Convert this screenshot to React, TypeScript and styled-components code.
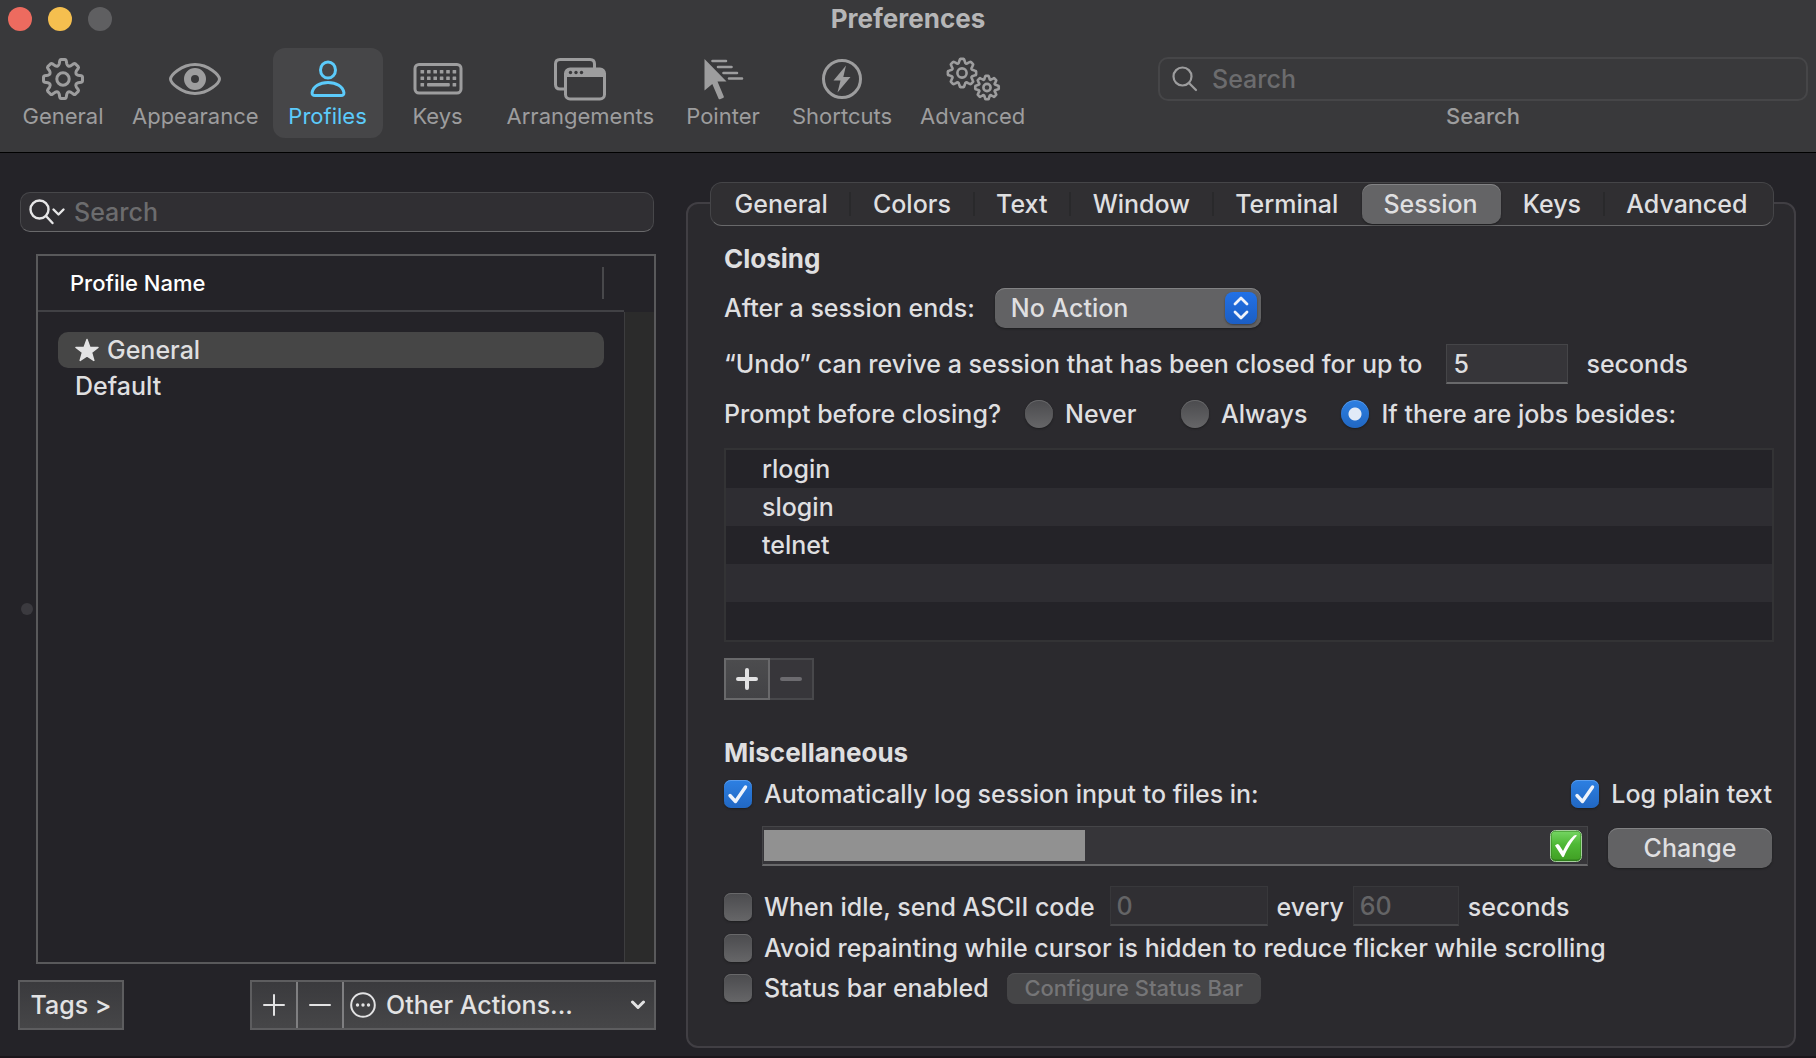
import React, { useState } from "react";
import styled, { createGlobalStyle, css } from "styled-components";

const GlobalStyle = createGlobalStyle`
  *, *::before, *::after { box-sizing: border-box; }
  body {
    margin: 0;
    background: #242328;
    color: #dfdfe0;
    font-family: Inter, "Noto Sans", sans-serif;
    font-size: 25px;
    line-height: 32px;
    font-weight: 450;
    font-optical-sizing: none;
  }
  button, input, select { font: inherit; color: inherit; margin: 0; }
  svg { display: block; flex: none; }
`;

/* ---------- window frame ---------- */

const Window = styled.div`
  display: flex;
  flex-direction: column;
  min-height: 100vh;
  border-bottom: 2px solid #1b161b;
`;

const Header = styled.header`
  background: #39393b;
  border-bottom: 1px solid #000;
`;

const TitleBar = styled.div`
  display: grid;
  grid-template-columns: 1fr auto 1fr;
  align-items: center;
  height: 38px;
  padding: 0 8px;
`;

const Lights = styled.div`
  display: flex;
  gap: 16px;
`;

const Light = styled.button<{ $color: string }>`
  width: 24px;
  height: 24px;
  padding: 0;
  border: 0;
  border-radius: 50%;
  background: ${(p) => p.$color};
`;

const Title = styled.h1`
  margin: 0;
  font-size: 26px;
  line-height: 32px;
  font-weight: 700;
  color: #b6b6b7;
`;

const Toolbar = styled.nav`
  display: flex;
  padding: 10px 8px 14px;
`;

const ToolItem = styled.button<{ $active?: boolean }>`
  display: flex;
  flex-direction: column;
  align-items: center;
  min-width: 110px;
  height: 90px;
  padding: 9px 14px 0;
  border: 0;
  border-radius: 12px;
  background: ${(p) => (p.$active ? "#464648" : "transparent")};
  color: ${(p) => (p.$active ? "#5ccbfb" : "#9d9d9e")};
  font-size: 22px;
  line-height: 30px;
  font-weight: 400;
`;

const ToolSearch = styled.div`
  display: flex;
  flex-direction: column;
  flex: 0 1 650px;
  margin-left: auto;
  padding-top: 9px;
  text-align: center;
  font-size: 22px;
  line-height: 30px;
  color: #9d9d9e;
`;

const ToolSearchField = styled.div`
  display: flex;
  align-items: center;
  gap: 14px;
  height: 44px;
  padding: 0 12px;
  border: 2px solid #464648;
  border-radius: 10px;
`;

const BareInput = styled.input`
  flex: 1;
  min-width: 0;
  padding: 0;
  border: 0;
  outline: 0;
  background: transparent;
  font-size: 25px;
  &::placeholder { color: #6c6c6e; opacity: 1; }
`;

const Body = styled.div`
  display: flex;
  flex: 1;
`;

/* ---------- profile list ---------- */

const Sidebar = styled.aside`
  display: flex;
  flex-direction: column;
  flex: 0 0 656px;
  padding: 39px 0 26px;
`;

const ProfileSearch = styled.div`
  display: flex;
  align-items: center;
  gap: 8px;
  height: 40px;
  margin: 0 2px 22px 20px;
  padding: 0 8px;
  border: 1px solid #47474a;
  border-bottom-color: #69696b;
  border-radius: 10px;
  background: #302f33;
`;

const ListArea = styled.div`
  display: flex;
  flex: 1;
`;

const SplitHandle = styled.div`
  display: flex;
  align-items: center;
  justify-content: flex-end;
  width: 36px;
  padding-right: 3px;
  &::after {
    content: "";
    width: 12px;
    height: 12px;
    border-radius: 50%;
    background: #3b3a3f;
  }
`;

const ListFrame = styled.div`
  display: flex;
  flex: 1;
  border: 2px solid #59595b;
`;

const ProfileTable = styled.table`
  display: block;
  flex: 1;
`;

const TableHead = styled.thead`
  display: block;
  border-bottom: 2px solid #414145;
`;

const HeadRow = styled.tr`
  display: flex;
  align-items: center;
  height: 54px;
  padding-right: 20px;
`;

const HeadCell = styled.th`
  flex: 1;
  padding: 0 0 0 32px;
  border-right: 2px solid #48484b;
  text-align: left;
  font-size: 22px;
  line-height: 32px;
  font-weight: 500;
  color: #fff;
`;

const TableBody = styled.tbody`
  display: block;
  padding: 20px;
`;

const ProfileRow = styled.tr<{ $selected?: boolean }>`
  display: flex;
  border-radius: 10px;
  background: ${(p) => (p.$selected ? "#464646" : "transparent")};
`;

const ProfileCell = styled.td`
  display: flex;
  align-items: center;
  gap: 8px;
  height: 36px;
  padding: 0 17px;
`;

const ScrollGutter = styled.div`
  width: 30px;
  margin-top: 56px;
  border-left: 1px solid #3d3d3f;
  background: #2b2b2b;
`;

const SidebarFooter = styled.div`
  display: flex;
  justify-content: space-between;
  margin: 16px 0 0 18px;
`;

const squareButton = css`
  height: 50px;
  border: 2px solid #5d5d5f;
  border-radius: 0;
  background: linear-gradient(#3a3a3d, #464648);
  color: #e2e2e3;
`;

const TagsButton = styled.button`
  ${squareButton}
  width: 106px;
  padding: 0;
`;

const ActionBar = styled.div`
  ${squareButton}
  display: flex;
  width: 406px;
`;

const ActionButton = styled.button`
  display: flex;
  align-items: center;
  justify-content: center;
  width: 46px;
  padding: 0;
  border: 0;
  border-right: 2px solid #7f7f81;
  background: transparent;
`;

const ActionMenu = styled.div`
  display: flex;
  align-items: center;
  flex: 1;
  gap: 10px;
  padding: 0 8px 0 6px;
`;

const BareSelect = styled.select`
  flex: 1;
  min-width: 0;
  height: 36px;
  padding: 0;
  border: 0;
  outline: 0;
  appearance: none;
  background: transparent;
`;

/* ---------- settings ---------- */

const Main = styled.main`
  display: flex;
  flex-direction: column;
  flex: 1;
  min-width: 0;
  padding: 29px 20px 8px 30px;
`;

const Tabs = styled.div`
  z-index: 1;
  display: flex;
  height: 44px;
  margin: 0 22px 0 24px;
  padding: 1px 2px;
  border: 1px solid #454548;
  border-bottom-color: #69696b;
  border-radius: 12px;
  background: #302f32;
`;

const Tab = styled.button<{ $active: boolean; $divider: boolean }>`
  display: flex;
  flex: 1 1 auto;
  align-items: center;
  padding: 0;
  border: 0;
  border-radius: 10px;
  background: transparent;
  white-space: nowrap;
  &::after {
    content: "";
    width: 2px;
    height: 24px;
    background: ${(p) => (p.$divider ? "#29292b" : "transparent")};
  }
  ${(p) =>
    p.$active &&
    css`
      background: #646466;
      box-shadow: inset 0 1px #828284, 0 1px 2px #1d1d1f;
    `}
`;

const TabText = styled.span`
  flex: 1;
  text-align: center;
`;

const Panel = styled.section`
  flex: 1;
  margin-top: -24px;
  padding: 35px 20px 35px 36px;
  border: 2px solid #413f44;
  border-radius: 12px;
  background: #2b2a2e;
`;

const Heading = styled.h2<{ $spaced?: boolean }>`
  margin: ${(p) => (p.$spaced ? "33px 0 1px" : "0 0 9px")};
  font-size: 26px;
  line-height: 40px;
  font-weight: 700;
`;

const Row = styled.div<{ $after?: number }>`
  display: flex;
  align-items: center;
  height: 40px;
  margin-bottom: ${(p) => p.$after ?? 0}px;
  white-space: nowrap;
`;

const PopUp = styled.div`
  display: flex;
  align-items: center;
  width: 266px;
  height: 40px;
  margin-left: 20px;
  padding: 0 4px 0 16px;
  border-radius: 10px;
  background: #626264;
  box-shadow: inset 0 1px #828284, 0 1px 2px #1d1d1f;
`;

const Stepper = styled.span`
  display: grid;
  place-items: center;
  width: 32px;
  height: 32px;
  border-radius: 8px;
  background: linear-gradient(#2271e6, #1b5ec4);
  box-shadow: 0 1px 2px #3c3c3e;
  pointer-events: none;
`;

const field = css`
  height: 40px;
  border: 1px solid #454548;
  border-bottom: 2px solid #69696b;
  border-radius: 0;
  background: #363539;
`;

const NumberField = styled.input<{ $width: number }>`
  ${field}
  width: ${(p) => p.$width}px;
  padding: 0 6px;
  outline: 0;
  &:disabled {
    border-color: #38383b;
    border-bottom-color: #464649;
    background: #302f33;
    color: #646466;
  }
`;

const Choice = styled.label`
  display: flex;
  align-items: center;
  gap: 12px;
`;

const UndoLabel = styled.label`
  display: flex;
  align-items: center;
  gap: 24px;
  margin-right: 18px;
`;

const Choices = styled.div`
  display: flex;
  gap: 34px;
  margin-left: 24px;
  & > label { min-width: 122px; }
`;

const toggle = css`
  appearance: none;
  flex: none;
  width: 28px;
  height: 28px;
  background: linear-gradient(#4b4b4e, #666668);
  box-shadow: inset 0 1px #68686a, 0 1px 2px #1d1d1f;
`;

const Radio = styled.input`
  ${toggle}
  border-radius: 50%;
  &:checked {
    background: radial-gradient(circle, #e1eaf7 6px, transparent 7px), linear-gradient(#2d80e3, #2167c2);
    box-shadow: inset 0 1px #5a9cec, 0 1px 2px #1d1d1f;
  }
`;

const CheckStack = styled.span`
  display: grid;
  flex: none;
  & > * { grid-area: 1 / 1; place-self: center; }
  & > svg { pointer-events: none; visibility: hidden; }
  & > input:checked + svg { visibility: visible; }
`;

const CheckInput = styled.input`
  ${toggle}
  border-radius: 7px;
  &:checked {
    background: linear-gradient(#2d80e3, #2167c2);
    box-shadow: inset 0 1px #5a9cec, 0 1px 2px #1d1d1f;
  }
`;

const JobList = styled.ul`
  margin: 0 0 16px;
  padding: 0;
  border: 2px solid #333335;
  list-style: none;
`;

const Job = styled.li`
  height: 38px;
  padding: 0 36px;
  line-height: 38px;
  background: #242328;
  &:nth-child(even) { background: #2e2d32; }
`;

const AddRemove = styled.div`
  display: flex;
`;

const SmallSquare = styled.button`
  display: grid;
  place-items: center;
  width: 46px;
  height: 42px;
  padding: 0;
  border: 2px solid #69696b;
  background: linear-gradient(#4c4c4e, #434346);
  color: #e2e2e3;
  &:disabled {
    width: 44px;
    border-color: #48484b;
    border-left-width: 0;
    background: #37363a;
    color: #6c6b6f;
  }
`;

const PathRow = styled.div`
  display: flex;
  gap: 20px;
  height: 42px;
  margin: 12px 2px 18px 38px;
`;

const PathField = styled.div`
  ${field}
  display: flex;
  align-items: center;
  flex: 1;
  padding: 0 5px 0 1px;
`;

const Redaction = styled.span`
  width: 321px;
  height: 31px;
  background: #919191;
`;

const PushButton = styled.button`
  align-self: flex-end;
  width: 164px;
  height: 40px;
  padding: 0;
  border: 0;
  border-radius: 10px;
  background: #626264;
  box-shadow: inset 0 1px #828284, 0 1px 2px #1d1d1f;
`;

const SmallPushButton = styled.button`
  width: 254px;
  height: 31px;
  margin-left: 18px;
  padding: 0;
  border: 0;
  border-radius: 8px;
  background: #454547;
  box-shadow: inset 0 1px #505052;
  color: #757577;
  font-size: 22px;
  line-height: 30px;
`;

const Spread = styled(Row)`
  justify-content: space-between;
  padding-right: 2px;
`;

const IdleRow = styled(Row)`
  gap: 9px;
  height: 42px;
  & > input { align-self: flex-start; }
  & > label:first-child { padding-right: 6px; }
`;

/* ---------- icons ---------- */

function gearPath(cx: number, cy: number, outer: number, root: number) {
  const at = (deg: number, r: number) => {
    const a = (deg * Math.PI) / 180;
    return `${(cx + r * Math.sin(a)).toFixed(2)} ${(cy - r * Math.cos(a)).toFixed(2)}`;
  };
  let d = "";
  for (let i = 0; i < 8; i++) {
    const t = i * 45;
    d += `${i ? "L" : "M"}${at(t - 14, root + 1)}L${at(t - 10, outer - 1)}Q${at(t - 9, outer)} ${at(t - 6, outer)}`;
    d += `L${at(t + 6, outer)}Q${at(t + 9, outer)} ${at(t + 10, outer - 1)}L${at(t + 14, root + 1)}`;
    d += `Q${at(t + 22.5, root - 2)} ${at(t + 31, root + 1)}`;
  }
  return d + "Z";
}

const GearIcon = () => (
  <svg width="44" height="44" fill="none" stroke="currentColor" strokeWidth="3" strokeLinejoin="round">
    <path d={gearPath(22, 22, 19.6, 14.6)} />
    <circle cx="22" cy="22" r="6.2" />
  </svg>
);

const GearsIcon = () => (
  <svg width="56" height="44" fill="none" stroke="currentColor" strokeWidth="2.6" strokeLinejoin="round">
    <path d={gearPath(17, 16, 14.2, 10.8)} />
    <circle cx="17" cy="16" r="4.6" />
    <path d={gearPath(42, 30.5, 11.8, 8.8)} />
    <circle cx="42" cy="30.5" r="3.6" />
  </svg>
);

const EyeIcon = () => (
  <svg width="56" height="44" fill="none" stroke="currentColor" strokeWidth="3">
    <path d="M3.5 22C3.5 18.500 14 7.500 28 7.500S52.500 18.500 52.500 22 42 36.500 28 36.500 3.500 25.500 3.500 22Z" />
    <circle cx="28" cy="22" r="7.500" strokeWidth="7" />
  </svg>
);

const PersonIcon = () => (
  <svg width="44" height="44" fill="none" stroke="currentColor" strokeWidth="3">
    <ellipse cx="22" cy="13" rx="7.500" ry="8" />
    <path d="M9 38.500h26q3.200 0 2.900-3C36.800 29.500 30.500 25.500 22 25.500S7.200 29.500 6.100 35.500q-.3 3 2.900 3Z" />
  </svg>
);

const KeyboardIcon = () => (
  <svg width="52" height="44" fill="currentColor">
    <rect x="3" y="7.500" width="46" height="28.500" rx="4" fill="none" stroke="currentColor" strokeWidth="3" />
    {[13, 19.5].map((y) =>
      [8.5, 15, 21.4, 27.8, 34.2, 40.600].map((x) => <rect key={`${x}-${y}`} x={x} y={y} width="3.600" height="3.600" rx=".5" />)
    )}
    <rect x="8.500" y="26" width="3.600" height="3.600" rx=".5" />
    <rect x="15" y="26" width="22.800" height="3.600" rx="1" />
    <rect x="40.600" y="26" width="3.600" height="3.600" rx=".5" />
  </svg>
);

const WindowsIcon = () => (
  <svg width="56" height="44" fill="none" stroke="currentColor" strokeWidth="3">
    <path d="M12 32H8q-4.500 0-4.500-4.500V7q0-4.500 4.500-4.500h30q4.500 0 4.500 4.500v4" />
    <rect x="13.500" y="12" width="39" height="30" rx="4.500" />
    <path d="M13.500 20v-4q0-4 4-4h31q4 0 4 4v4Z" fill="currentColor" stroke="none" />
    <g fill="#39393b" stroke="none">
      <circle cx="18.500" cy="15.500" r="1.700" />
      <circle cx="24" cy="15.500" r="1.700" />
      <circle cx="29.500" cy="15.500" r="1.700" />
    </g>
  </svg>
);

const PointerIcon = () => (
  <svg width="42" height="44" fill="currentColor">
    <path d="M2.500 2 24.500 24.500H15.500L21.800 39.500q.3 1-.8 1.500l-3 1.200q-1 .3-1.500-.8L10.300 27 2.500 33.500Z" />
    <g stroke="currentColor" strokeWidth="2.600" strokeLinecap="round">
      <path d="M10.500 4H24M16 10H29.500M21.500 16H35M27 21.500H40" />
    </g>
  </svg>
);

const BoltIcon = () => (
  <svg width="44" height="44">
    <circle cx="22" cy="22" r="18.500" fill="none" stroke="currentColor" strokeWidth="3" />
    <path d="M26 8.500 13.500 23.500h7L17.500 35.500 30.500 20h-7.200Z" fill="currentColor" />
  </svg>
);

const SearchIcon = () => (
  <svg width="26" height="26" fill="none" stroke="currentColor" strokeWidth="2.200" strokeLinecap="round">
    <circle cx="10.500" cy="10.500" r="9" />
    <path d="m17 17 7 7" />
  </svg>
);

const SearchMenuIcon = () => (
  <svg width="37" height="26" fill="none" stroke="#e6e6e7" strokeWidth="2.400" strokeLinecap="round" strokeLinejoin="round">
    <circle cx="10.500" cy="10.500" r="9" />
    <path d="m17 17 6.500 7M24.500 10.500l5 5 5-5" />
  </svg>
);

const StarIcon = () => (
  <svg width="24" height="24" viewBox="0 0 24 24" fill="#e4e4e5" stroke="#e4e4e5" strokeWidth="1.500" strokeLinejoin="round">
    <path d="m12 1.500 2.800 7.700 8.200.3-6.500 5 2.300 7.900L12 17.800l-6.800 4.600 2.300-7.900-6.500-5 8.200-.3Z" />
  </svg>
);

const Sign = ({ plus, size, weight }: { plus?: boolean; size: number; weight: number }) => (
  <svg width="24" height="24" stroke="currentColor" strokeWidth={weight} strokeLinecap="round">
    <path d={`M${12 - size} 12H${12 + size}${plus ? `M12 ${12 - size}V${12 + size}` : ""}`} />
  </svg>
);

const EllipsisIcon = () => (
  <svg width="26" height="26" fill="#e2e2e3">
    <circle cx="13" cy="13" r="11.800" fill="none" stroke="#e2e2e3" strokeWidth="2" />
    <circle cx="7.500" cy="13" r="1.700" />
    <circle cx="13" cy="13" r="1.700" />
    <circle cx="18.500" cy="13" r="1.700" />
  </svg>
);

const ChevronIcon = () => (
  <svg width="16" height="10" fill="none" stroke="#e2e2e3" strokeWidth="3" strokeLinecap="round" strokeLinejoin="round">
    <path d="m2.500 2 5.500 5.500L13.500 2" />
  </svg>
);

const StepperIcon = () => (
  <svg width="20" height="24" fill="none" stroke="#f0f3fa" strokeWidth="2.800" strokeLinecap="round" strokeLinejoin="round">
    <path d="m4 8 6-6 6 6M4 16l6 6 6-6" />
  </svg>
);

const TickIcon = () => (
  <svg width="28" height="28" fill="none" stroke="#eef3fb" strokeWidth="3.400" strokeLinecap="round" strokeLinejoin="round">
    <path d="m6 15.500 5.500 6L21.500 7" />
  </svg>
);

const ValidIcon = () => (
  <svg width="32" height="32">
    <defs>
      <linearGradient id="valid" x1="0" y1="0" x2="0" y2="1">
        <stop offset="0" stopColor="#74d462" />
        <stop offset=".45" stopColor="#4fb936" />
        <stop offset="1" stopColor="#41a125" />
      </linearGradient>
    </defs>
    <rect x=".5" y=".5" width="31" height="31" rx="5" fill="#2f7f1c" stroke="#a5cf9c" />
    <rect x="1.500" y="1.500" width="29" height="28" rx="4" fill="url(#valid)" />
    <path d="M5 15.500q3-3 4.500 0l3.500 5.500C16 14.500 19.500 9.500 24 5.500q2-1 3 0C21 12.500 17.500 18.500 14 26.500q-1 1.500-2 0Z" fill="#fff" />
  </svg>
);

/* ---------- page ---------- */

const tools = [
  { name: "General", icon: <GearIcon /> },
  { name: "Appearance", icon: <EyeIcon /> },
  { name: "Profiles", icon: <PersonIcon /> },
  { name: "Keys", icon: <KeyboardIcon /> },
  { name: "Arrangements", icon: <WindowsIcon /> },
  { name: "Pointer", icon: <PointerIcon /> },
  { name: "Shortcuts", icon: <BoltIcon /> },
  { name: "Advanced", icon: <GearsIcon /> },
];

const tabs = ["General", "Colors", "Text", "Window", "Terminal", "Session", "Keys", "Advanced"];
const prompts = ["Never", "Always", "If there are jobs besides:"];
const jobs = ["rlogin", "slogin", "telnet", "", ""];

function CheckBox({ label, initial = false }: { label: string; initial?: boolean }) {
  return (
    <Choice>
      <CheckStack>
        <CheckInput type="checkbox" defaultChecked={initial} />
        <TickIcon />
      </CheckStack>
      {label}
    </Choice>
  );
}

export default function App() {
  const [tool, setTool] = useState("Profiles");
  const [tab, setTab] = useState("Session");
  const activeTab = tabs.indexOf(tab);

  return (
    <Window>
      <GlobalStyle />
      <Header>
        <TitleBar>
          <Lights>
            <Light $color="#ed6b5f" aria-label="Close" />
            <Light $color="#f5bf4f" aria-label="Minimize" />
            <Light $color="#5f5f61" aria-label="Zoom" />
          </Lights>
          <Title>Preferences</Title>
        </TitleBar>
        <Toolbar>
          {tools.map((t) => (
            <ToolItem key={t.name} $active={t.name === tool} onClick={() => setTool(t.name)}>
              {t.icon}
              {t.name}
            </ToolItem>
          ))}
          <ToolSearch>
            <ToolSearchField>
              <SearchIcon />
              <BareInput id="tool-search" type="text" placeholder="Search" />
            </ToolSearchField>
            <label htmlFor="tool-search">Search</label>
          </ToolSearch>
        </Toolbar>
      </Header>

      <Body>
        <Sidebar>
          <ProfileSearch>
            <SearchMenuIcon />
            <BareInput type="text" placeholder="Search" aria-label="Search profiles" />
          </ProfileSearch>
          <ListArea>
            <SplitHandle />
            <ListFrame>
              <ProfileTable>
                <TableHead>
                  <HeadRow>
                    <HeadCell>Profile Name</HeadCell>
                  </HeadRow>
                </TableHead>
                <TableBody>
                  <ProfileRow $selected>
                    <ProfileCell>
                      <StarIcon />
                      General
                    </ProfileCell>
                  </ProfileRow>
                  <ProfileRow>
                    <ProfileCell>Default</ProfileCell>
                  </ProfileRow>
                </TableBody>
              </ProfileTable>
              <ScrollGutter />
            </ListFrame>
          </ListArea>
          <SidebarFooter>
            <TagsButton>Tags &gt;</TagsButton>
            <ActionBar>
              <ActionButton aria-label="Add profile">
                <Sign plus size={10} weight={2} />
              </ActionButton>
              <ActionButton aria-label="Remove profile">
                <Sign size={10} weight={2} />
              </ActionButton>
              <ActionMenu>
                <EllipsisIcon />
                <BareSelect aria-label="Other actions">
                  <option>Other Actions...</option>
                </BareSelect>
                <ChevronIcon />
              </ActionMenu>
            </ActionBar>
          </SidebarFooter>
        </Sidebar>

        <Main>
          <Tabs role="tablist">
            {tabs.map((name, i) => (
              <Tab
                key={name}
                role="tab"
                aria-selected={name === tab}
                $active={name === tab}
                $divider={i !== activeTab && i !== activeTab - 1 && i !== tabs.length - 1}
                onClick={() => setTab(name)}
              >
                <TabText>{name}</TabText>
              </Tab>
            ))}
          </Tabs>
          <Panel>
            <Heading>Closing</Heading>
            <Row $after={16}>
              <label htmlFor="end-action">After a session ends:</label>
              <PopUp>
                <BareSelect id="end-action">
                  <option>No Action</option>
                </BareSelect>
                <Stepper>
                  <StepperIcon />
                </Stepper>
              </PopUp>
            </Row>
            <Row $after={10}>
              <UndoLabel>
                “Undo” can revive a session that has been closed for up to
                <NumberField $width={122} type="text" defaultValue="5" />
              </UndoLabel>
              seconds
            </Row>
            <Row $after={14} role="radiogroup" aria-label="Prompt before closing?">
              Prompt before closing?
              <Choices>
                {prompts.map((p, i) => (
                  <Choice key={p}>
                    <Radio type="radio" name="prompt" defaultChecked={i === 2} />
                    {p}
                  </Choice>
                ))}
              </Choices>
            </Row>
            <JobList>
              {jobs.map((job, i) => (
                <Job key={i}>{job}</Job>
              ))}
            </JobList>
            <AddRemove>
              <SmallSquare aria-label="Add job">
                <Sign plus size={9} weight={4} />
              </SmallSquare>
              <SmallSquare aria-label="Remove job" disabled>
                <Sign size={9} weight={4} />
              </SmallSquare>
            </AddRemove>

            <Heading $spaced>Miscellaneous</Heading>
            <Spread>
              <CheckBox label="Automatically log session input to files in:" initial />
              <CheckBox label="Log plain text" initial />
            </Spread>
            <PathRow>
              <PathField>
                <Redaction />
                <BareInput type="text" aria-label="Log folder" />
                <ValidIcon />
              </PathField>
              <PushButton>Change</PushButton>
            </PathRow>
            <IdleRow>
              <CheckBox label="When idle, send ASCII code" />
              <NumberField $width={158} type="text" defaultValue="0" aria-label="ASCII code" disabled />
              <label htmlFor="idle-seconds">every</label>
              <NumberField id="idle-seconds" $width={106} type="text" defaultValue="60" disabled />
              seconds
            </IdleRow>
            <Row>
              <CheckBox label="Avoid repainting while cursor is hidden to reduce flicker while scrolling" />
            </Row>
            <Row>
              <CheckBox label="Status bar enabled" />
              <SmallPushButton disabled>Configure Status Bar</SmallPushButton>
            </Row>
          </Panel>
        </Main>
      </Body>
    </Window>
  );
}
